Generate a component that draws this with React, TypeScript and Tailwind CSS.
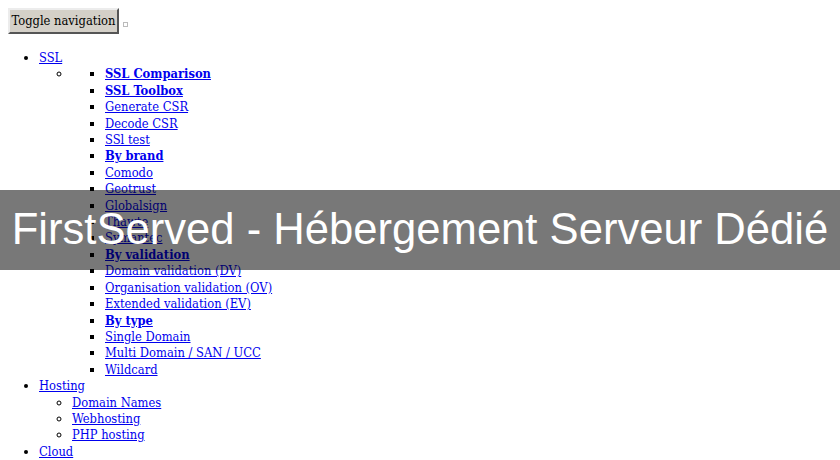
const sslLinks: { label: string; bold?: boolean }[] = [
  { label: "SSL Comparison", bold: true },
  { label: "SSL Toolbox", bold: true },
  { label: "Generate CSR" },
  { label: "Decode CSR" },
  { label: "SSl test" },
  { label: "By brand", bold: true },
  { label: "Comodo" },
  { label: "Geotrust" },
  { label: "Globalsign" },
  { label: "Thawte" },
  { label: "Symantec" },
  { label: "By validation", bold: true },
  { label: "Domain validation (DV)" },
  { label: "Organisation validation (OV)" },
  { label: "Extended validation (EV)" },
  { label: "By type", bold: true },
  { label: "Single Domain" },
  { label: "Multi Domain / SAN / UCC" },
  { label: "Wildcard" },
];

const hostingLinks = ["Domain Names", "Webhosting", "PHP hosting"];

function NavLink({ label, bold }: { label: string; bold?: boolean }) {
  return (
    <a href="#" className={`text-[#0000ee] underline ${bold ? "font-bold" : ""}`}>
      {label}
    </a>
  );
}

export default function App() {
  return (
    <div className="relative w-[840px] h-[460px] overflow-hidden bg-white text-black text-[12.8px] leading-[16.4px] font-['DejaVu_Serif_Condensed','DejaVu_Serif',serif]">
      <div className="flex items-center pt-[8px] pl-[8px]">
        <button className="h-[26px] w-[111px] px-0 bg-[#d4d0c8] border-2 border-t-[#ececec] border-l-[#ececec] border-b-[#555] border-r-[#555] text-[12.8px] text-black whitespace-nowrap">
          Toggle navigation
        </button>
        <span className="ml-[4px] mt-[6px] w-[5px] h-[5px] border border-[#bbb]"></span>
      </div>

      <ul className="list-disc pl-[39px] mt-[16px]">
        <li>
          <NavLink label="SSL" />
          <ul className="list-[circle] pl-[33px]">
            <li>
              <ul className="list-[square] pl-[33px]">
                {sslLinks.map((item) => (
                  <li key={item.label}>
                    <NavLink label={item.label} bold={item.bold} />
                  </li>
                ))}
              </ul>
            </li>
          </ul>
        </li>
        <li>
          <NavLink label="Hosting" />
          <ul className="list-[circle] pl-[33px]">
            {hostingLinks.map((h) => (
              <li key={h}>
                <NavLink label={h} />
              </li>
            ))}
          </ul>
        </li>
        <li>
          <NavLink label="Cloud" />
        </li>
      </ul>

      <div className="absolute left-0 right-0 top-[190px] h-[80px] bg-[rgba(0,0,0,0.53)] flex items-center justify-center">
        <h1 className="text-white text-[43.6px] leading-none font-['Liberation_Sans',Arial,sans-serif] whitespace-nowrap">
          FirstServed - Hébergement Serveur Dédié
        </h1>
      </div>
    </div>
  );
}
